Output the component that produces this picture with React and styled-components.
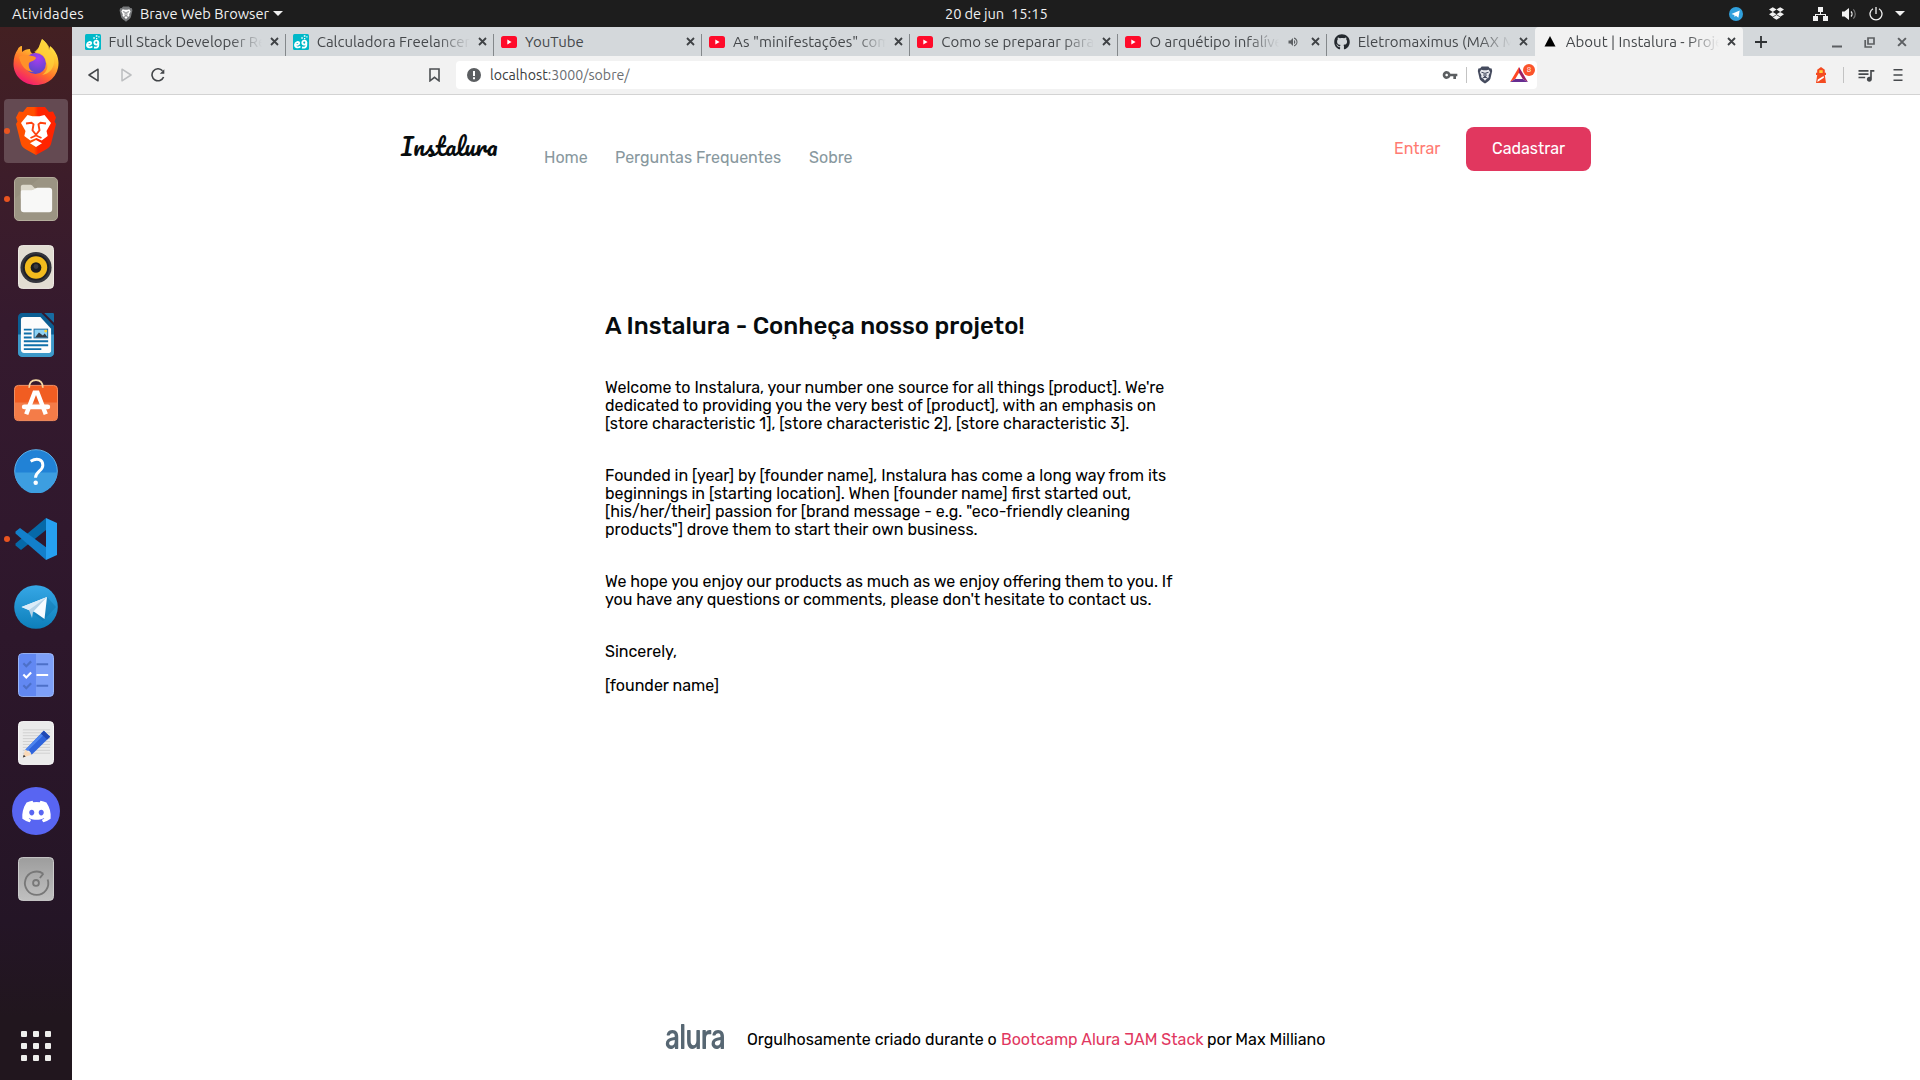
import React, { useLayoutEffect, useRef, useState } from "react";
import styled, { createGlobalStyle, css } from "styled-components";
import { FaGithub, FaDropbox, FaDiscord } from "react-icons/fa";
import { MdVpnKey, MdVolumeUp, MdQueueMusic } from "react-icons/md";

const GlobalStyle = createGlobalStyle`
  * { box-sizing: border-box; }
  body { margin: 0; background: #fff; overflow: hidden; }
  svg { display: block; flex: none; }
`;

const uiFont = `"Ubuntu", "Noto Sans", "Open Sans", sans-serif`;
const pageFont = `"Rubik", Roboto, "Liberation Sans", sans-serif`;

/* ---------- text that is tracked to a fixed measure ---------- */
const Line = styled.span`
  display: block;
  flex: none;
  white-space: pre;
  width: ${(p) => p.$w}px;
`;

/* Natural spacing (and ligatures) is kept when the text is already close to its measure. */
function Fit({ w, children, as, slack = 0.02 }) {
  const ref = useRef(null);
  const [gap, setGap] = useState("normal");
  useLayoutEffect(() => {
    const range = document.createRange();
    range.selectNodeContents(ref.current);
    const natural = range.getBoundingClientRect().width;
    if (Math.abs(natural - w) > w * slack) {
      setGap(`${(w - natural) / ref.current.textContent.length}px`);
    }
  }, []);
  return (
    <Line ref={ref} as={as} $w={w} style={{ letterSpacing: gap }}>
      {children}
    </Line>
  );
}

/* ---------- desktop ---------- */
const Desktop = styled.div`
  width: 1920px;
  height: 1080px;
  display: flex;
  flex-direction: column;
  overflow: hidden;
  background: #fff;
`;

const TopBar = styled.header`
  height: 27px;
  flex: none;
  display: grid;
  grid-template-columns: 945px 1fr auto;
  align-items: center;
  background: #1d1d1d;
  color: #f0f0f0;
  font: 400 14.667px/26px ${uiFont};
`;

const TopGroup = styled.div`
  display: flex;
  align-items: center;
  height: 26px;
  padding-left: ${(p) => p.$left || 0}px;
`;

const Space = styled.span`
  flex: none;
  width: ${(p) => p.$w}px;
`;

const Caret = styled.i`
  width: 0;
  height: 0;
  border: 5px solid transparent;
  border-top: 5px solid #f0f0f0;
  border-bottom: 0;
`;

const Body = styled.div`
  flex: 1;
  display: flex;
  min-height: 0;
`;

/* ---------- dock ---------- */
const Dock = styled.nav`
  width: 72px;
  flex: none;
  display: flex;
  flex-direction: column;
  padding: 2px 0 16px;
  background: linear-gradient(#432022 0%, #3d1d2a 14%, #351a2e 28%, #30182d 48%, #2a1629 68%, #241526 85%, #21161e 94%, #21161e 100%);
`;

const Slot = styled.div`
  position: relative;
  height: 68px;
  flex: none;
  display: flex;
  align-items: center;
  justify-content: center;
`;

const Tile = styled.div`
  width: 64px;
  height: 64px;
  border-radius: 4px;
  display: flex;
  align-items: center;
  justify-content: center;
  background: ${(p) => (p.$active ? "#644a52" : "transparent")};
`;

const RunningDot = styled.i`
  position: absolute;
  left: 4px;
  top: 31px;
  width: 6px;
  height: 6px;
  border-radius: 50%;
  background: #e95420;
`;

const DiscordDisc = styled.div`
  width: 48px;
  height: 48px;
  border-radius: 50%;
  background: #5865f2;
  color: #fff;
  display: flex;
  align-items: center;
  justify-content: center;
`;

const AppsGrid = styled.div`
  margin: auto auto 0;
  height: 33px;
  display: grid;
  grid-template-columns: repeat(3, 6px);
  grid-auto-rows: 6px;
  gap: 6px;
`;

const AppsCell = styled.i`
  background: #eeeeec;
  border-radius: 1px;
`;

/* ---------- browser chrome ---------- */
const Browser = styled.section`
  flex: 1;
  min-width: 0;
  display: flex;
  flex-direction: column;
`;

const TabStrip = styled.div`
  height: 29px;
  flex: none;
  display: flex;
  background: #d4d8db;
  padding-left: 5.5px;
  color: #46494c;
`;

const TabBox = styled.div`
  width: 208.2px;
  flex: none;
  display: flex;
  align-items: center;
  padding-left: 7px;
  font: 400 15px/29px ${uiFont};
  color: #45484b;
  ${(p) =>
    p.$active
      ? css`
          background: #f2f2f2;
          border-radius: 4px 4px 0 0;
        `
      : css`
          background: linear-gradient(#84888b, #84888b) no-repeat right bottom /
            ${p.$last ? "0" : "1px"} 22px;
        `}
`;

const Favicon = styled.span`
  width: 16px;
  flex: none;
  margin-right: 8px;
  display: flex;
  justify-content: center;
`;

const TabTitle = styled.span`
  width: ${(p) => p.$w}px;
  flex: none;
  overflow: hidden;
  white-space: nowrap;
  mask-image: ${(p) =>
    p.$fade ? "linear-gradient(90deg, #000 calc(100% - 32px), transparent)" : "none"};
`;

const TabEnd = styled.span`
  margin-left: auto;
  padding-right: 7px;
  display: flex;
  align-items: center;
  gap: 12px;
`;

const StripTools = styled.div`
  flex: 1;
  display: flex;
  align-items: center;
  padding: 1px 13px 0 12px;
`;

const Toolbar = styled.div`
  height: 39px;
  flex: none;
  display: flex;
  align-items: center;
  background: #f2f2f2;
  border-bottom: 1px solid #d3d3d3;
`;

const NavButtons = styled.div`
  width: 384px;
  padding: 0 16px;
  display: flex;
  align-items: center;
`;

const AddressBar = styled.div`
  width: 1081px;
  height: 28px;
  border-radius: 4px;
  background: #fff;
  display: flex;
  align-items: center;
  padding: 0 2px 0 11px;
  font: 400 14.2px/28px ${uiFont};
  color: #6b6e71;
  b { font-weight: 400; color: #3b3d40; }
`;

const AddressTools = styled.div`
  margin-left: auto;
  display: flex;
  align-items: center;
`;

const Divider = styled.i`
  width: 1px;
  height: 16px;
  background: #c3c3c3;
`;

const Rewards = styled.div`
  position: relative;
  width: 25px;
  height: 22px;
  padding: 3px 0 0;
`;

const RewardBadge = styled.span`
  position: absolute;
  right: 0;
  top: 0;
  width: 12px;
  height: 12px;
  border-radius: 50%;
  background: #fb542b;
  color: #fff;
  text-align: center;
  font: 400 8px/12px ${uiFont};
`;

const ToolbarEnd = styled.div`
  margin-left: auto;
  padding-right: 17px;
  display: flex;
  align-items: center;
`;

/* ---------- web page ---------- */
const Page = styled.main`
  flex: 1;
  min-height: 0;
  display: flex;
  flex-direction: column;
  background: #fff;
  color: #000;
  font: 400 16px/18px ${pageFont};
`;

const SiteHeader = styled.header`
  display: flex;
  align-items: flex-start;
  padding: 32px 329px 0;
`;

const Brand = styled.span`
  width: 97px;
  height: 38px;
  margin: 0 46px 0 0;
  font: 400 24.3px/38px "Pacifico", Lato, cursive;
  color: #070c0e;
  white-space: nowrap;
`;

const Links = styled.nav`
  display: flex;
  gap: 28px;
  padding-top: 22px;
  color: #88989e;
`;

const Actions = styled.div`
  margin-left: auto;
  display: flex;
  align-items: center;
  gap: 26px;
`;

const SignIn = styled.a`
  color: #ff7b72;
`;

const SignUp = styled.button`
  width: 125px;
  height: 44px;
  border: 0;
  border-radius: 8px;
  padding: 0 0 0 26px;
  background: #e1375f;
  color: #fff;
  font: inherit;
  text-align: left;
`;

const Article = styled.article`
  padding: 141px 0 0 533px;
`;

const Title = styled.h1`
  margin: 0 0 39px;
  font: 500 24px/28px ${pageFont};
  color: #070c0e;
`;

const Paragraph = styled.p`
  margin: 0 0 ${(p) => p.$gap || 34}px;
`;

const SiteFooter = styled.footer`
  margin-top: auto;
  height: 81px;
  display: flex;
  align-items: center;
  padding-left: 593px;
`;

const AluraMark = styled.span`
  width: 60px;
  height: 34px;
  margin-right: 22px;
  color: #576773;
  font: 500 26px/36px ${pageFont};
  transform: scale(1, 1.37);
  transform-origin: 0 26px;
`;

const FooterText = styled.p`
  margin: 0;
  display: flex;
  gap: 4px;
  a { color: #e1375f; }
`;

/* ---------- small icons ---------- */
const Cross = ({ s = 9, c = "#3f4245", w = 1.8 }) => (
  <svg width={s} height={s} viewBox="0 0 9 9" stroke={c} strokeWidth={w}>
    <path d="M1 1l7 7M8 1l-7 7" />
  </svg>
);

const YouTube = () => (
  <svg width="16" height="12" viewBox="0 0 16 12">
    <rect width="16" height="12" rx="2.6" fill="#ff0b2a" />
    <path d="M6.3 3.500v5l4.300-2.500z" fill="#fff" />
  </svg>
);

const NinetyNine = () => (
  <svg width="16" height="16" viewBox="0 0 16 16">
    <rect width="16" height="16" rx="1.500" fill="#00b8c8" />
    <g fill="none" stroke="#fff" strokeWidth="1.800">
      <circle cx="11.300" cy="8.600" r="2" />
      <path d="M13.300 8.300v3c0 2-1.800 2.700-4.300 2.200M2 10.700c2 .6 4.300-.2 4.200-1.700-.2-1.700-3.900-1.200-4.200 1.700-.2 3 3.600 3.500 5.300 1.600" />
    </g>
    <path d="M8.300 3.200h1.500v1.500H8.300zM10.800 1.200h1.600v1.600h-1.600zM11 4h1.300v1.300H11zM13.300 2.300h1.200v1.200h-1.200z" fill="#fff" />
  </svg>
);

const Triangle = () => (
  <svg width="12" height="11" viewBox="0 0 12 11"><path d="M6 0l5.500 10.500H.5z" fill="#000" /></svg>
);

const ShieldLion = ({ w, h, dark, face }) => (
  <svg width={w} height={h} viewBox="0 0 16 19">
    <path d="M4.500.6h7l1.600 1.700 1.900.4.600 2.500-1.900 8.200c-.4 1.500-3.500 3.600-5.700 5.200-2.200-1.600-5.300-3.700-5.700-5.200L.4 5.200 1 2.700l1.900-.4z" fill={dark} />
    <path d="M4 4l2.500.5h3L12 4l1.500 2.500-1.700 3.300.3 2.200-2.300 1.500L8 15.600l-1.800-2.100L3.900 12l.3-2.200L2.500 6.500z" fill={face} />
    <path d="M4.300 6.700l2.900.8-.3 2.600L8 11.600l1.100-1.500-.3-2.600 2.900-.8M5.700 12.300L8 11.800l2.300.5" fill="none" stroke={dark} strokeWidth="1.100" />
  </svg>
);

const TelegramSmall = () => (
  <svg width="14" height="14" viewBox="0 0 14 14">
    <circle cx="7" cy="7" r="7" fill="#30a0dc" />
    <path d="M2.500 7l8.200-3.600-1.300 7.300-2.500-1.900-1.300 1.300-.3-2.200z" fill="#fff" />
  </svg>
);

const Network = () => (
  <svg width="15" height="14" viewBox="0 0 15 14" fill="#f2f2f2">
    <path d="M5 0h5v5H5zM0 9h5v5H0zM10 9h5v5h-5zM7 5h1v2H7zM2 7h11v2h-1V8H3v1H2z" />
  </svg>
);

const Volume = () => (
  <svg width="15" height="14" viewBox="0 0 15 14">
    <path d="M0 4.500h2.500L7 1v12L2.500 9.500H0z" fill="#f2f2f2" />
    <path d="M9 4.500c1.300 1.300 1.300 3.700 0 5" fill="none" stroke="#f2f2f2" strokeWidth="1.300" />
    <path d="M11.300 2.300c2.600 2.600 2.600 6.800 0 9.400" fill="none" stroke="#777" strokeWidth="1.200" />
  </svg>
);

const Power = () => (
  <svg width="14" height="14" viewBox="0 0 14 14" fill="none" stroke="#f2f2f2" strokeWidth="1.300">
    <path d="M7 0v7M4 1.700a6 6 0 1 0 6 0" />
  </svg>
);

const BackForward = ({ flip, c }) => (
  <svg width="11" height="14" viewBox="0 0 11 14" fill="none" stroke={c} strokeWidth="1.500" strokeLinejoin="round">
    <path d={flip ? "M1 1.200l9 5.800-9 5.800z" : "M10 1.200L1 7l9 5.800z"} />
  </svg>
);

const Reload = () => (
  <svg width="14" height="14" viewBox="0 0 14 14">
    <path d="M11.500 2.800A6 6 0 1 0 12.600 9" fill="none" stroke="#424548" strokeWidth="1.600" />
    <path d="M13.300 1.200v4.500H8.800z" fill="#424548" />
  </svg>
);

const Bookmark = () => (
  <svg width="11" height="14" viewBox="0 0 11 14" fill="none" stroke="#4c4f52" strokeWidth="1.600">
    <path d="M1 1h9v11.800L5.500 9.300 1 12.800z" />
  </svg>
);

const Info = () => (
  <svg width="14" height="14" viewBox="0 0 14 14">
    <circle cx="7" cy="7" r="7" fill="#5b5e61" />
    <path d="M6 3h2v5H6zM6 9.300h2v2H6z" fill="#fff" />
  </svg>
);

const Bat = () => (
  <svg width="18" height="15" viewBox="0 0 19 16">
    <path d="M9.500 0L0 16l5.500-3.100 4-6.900z" fill="#ff4724" />
    <path d="M9.500 0L19 16l-5.500-3.100-4-6.900z" fill="#9e1f63" />
    <path d="M0 16h19l-5.500-3.100h-8z" fill="#662d91" />
  </svg>
);

const Lighthouse = () => (
  <svg width="12" height="16" viewBox="0 0 12 16">
    <path d="M6 0l3.800 2.800v3h1.200V8H9.800l1.200 8H1l1.200-8H1V5.800h1.200v-3z" fill="#f44b21" />
    <rect x="4.300" y="3.200" width="3.400" height="2.800" fill="#ffd13b" />
    <path d="M2.800 12.400L8.600 9l.3 1.800L2.300 15z" fill="#fff" />
  </svg>
);

const Restore = () => (
  <svg width="11" height="11" viewBox="0 0 11 11" fill="none" stroke="#5c5f62" strokeWidth="1.700">
    <path d="M4 1h6v6H4zM1.200 3v7H8" />
  </svg>
);

/* ---------- dock icons ---------- */
const Firefox = () => (
  <svg width="46" height="48" viewBox="0 0 46 48">
    <defs>
      <linearGradient id="fx1" x1=".8" y1="0" x2=".25" y2="1">
        <stop offset="0" stopColor="#fff44f" /><stop offset=".35" stopColor="#ffbd2e" />
        <stop offset=".65" stopColor="#ff6a2b" /><stop offset="1" stopColor="#f0107a" />
      </linearGradient>
      <radialGradient id="fx2" cx=".6" cy=".25" r=".8">
        <stop offset="0" stopColor="#a83df0" /><stop offset="1" stopColor="#5148c4" />
      </radialGradient>
    </defs>
    <path d="M29 0c4 3 6 6 7 11 1-1 1-2 1-4 5 4 8.500 10 8.500 17C45.500 37 35.500 46 23 46S.5 37 .5 25C.5 19 2 14 5 10c0-1 2-3 4-3v6c2-2 5-3 8-3 0 2 1 4 3 5 6-3 6-9 9-15z" fill="url(#fx1)" />
    <circle cx="22.500" cy="24.500" r="10.500" fill="url(#fx2)" />
    <path d="M6 18c4-3 9-2 13-1 2 0 4 1 4 2-1 3-5 3-7 5-1 4 1 8 5 9-8 0-13-6-15-15z" fill="#ff912a" />
    <path d="M29 0c-1 7-5 11-8 13 7 0 12 4 12 10 3 4 1 10-4 13 8-1 13-8 12-16C40 11 34 4 29 0z" fill="#ffd03a" opacity=".75" />
  </svg>
);

const BraveLion = () => (
  <svg width="40" height="48" viewBox="0 0 40 48">
    <defs>
      <linearGradient id="br"><stop offset=".45" stopColor="#ff5000" /><stop offset=".55" stopColor="#ff2400" /></linearGradient>
    </defs>
    <path d="M11 0h18l4 5 4-.5 3 6-1.500 4L40 17l-5 20c-1 3-3 4-6 6l-9 5-9-5c-3-2-5-3-6-6L0 17l1.500-2.500L0 10.500l3-6L7 5z" fill="url(#br)" />
    <path d="M11.500 8l5 1.200h7L28.500 8l6.500 8-4.500 8 1.200 5-6 4.500-5.200-2.500-6.200 2.500-6-4.500 1.200-5L5 16zM20 33l6 3.200L20 40l-6-3.800z" fill="#fff" />
    <path d="M10 16.500l5.500-.7 2 1.500-1 6 3.500 4.500 3.500-4.500-1-6 2-1.500 5.500.7M14.500 31l5.500-2.500 5.500 2.500" fill="none" stroke="#ff4210" strokeWidth="1.900" />
  </svg>
);

const Files = () => (
  <svg width="44" height="44" viewBox="0 0 45 45">
    <rect x=".5" y=".5" width="44" height="44" rx="4.500" fill="#968f7e" stroke="#b7b09f" />
    <path d="M1 22L26 1h14c3 0 4 2 4 4v35c0 3-2 4-4 4H5c-3 0-4-2-4-4z" fill="#a09987" opacity=".5" />
    <path d="M7 10c0-1 1-2 2-2h8c2 0 3 3.500 5 3.500h8V22H7z" fill="#dcd8cb" />
    <path d="M7 15c0-1 1-1.500 2-1.500h9c3 0 4-2.500 6-2.500h12c2 0 3 1 3 3v19c0 2-1 3-3 3H10c-2 0-3-1-3-3z" fill="#f8f8f7" />
  </svg>
);

const Rhythmbox = () => (
  <svg width="36" height="44" viewBox="0 0 37 45">
    <rect x=".5" y=".5" width="36" height="44" rx="4" fill="#e2ddd2" stroke="#f1eee7" />
    <circle cx="18.500" cy="23" r="16" fill="#34353c" />
    <circle cx="18.500" cy="23" r="13.500" fill="#1f2026" />
    <circle cx="18.500" cy="23" r="11.500" fill="#f2bb1d" />
    <circle cx="18.500" cy="23" r="5.500" fill="#1c1c1f" />
    <circle cx="18.500" cy="22" r="2.500" fill="#3b3b3f" />
  </svg>
);

const Writer = () => (
  <svg width="36" height="44" viewBox="0 0 37 45">
    <path d="M4 0h20l13 13v28c0 2-2 4-4 4H4c-2 0-4-2-4-4V4c0-2 2-4 4-4z" fill="#0b5e93" />
    <path d="M0 22h37v19c0 2-2 4-4 4H4c-2 0-4-2-4-4z" fill="#3d99c9" />
    <path d="M6 4h17l11 12v23c0 1-1 2-2 2H6c-1 0-3-1-3-3V7c0-2 1-3 3-3z" fill="#fcfcfc" />
    <path d="M27 0h9c1 0 1 1 1 2v8z" fill="#176ba1" />
    <path d="M6 16h8v2H6zM6 20h8v2H6zM6 24h8v2H6zM6 28h25v2H6zM6 32h25v2H6zM6 36h18v2H6z" fill="#0f6fa9" />
    <rect x="16.500" y="16.500" width="14" height="9" fill="#8ed2f4" stroke="#176ba1" />
    <path d="M17.500 25l4-5 4 3 2-2 3 4z" fill="#333c45" /><circle cx="28.500" cy="18.500" r="1.500" fill="#ffd22f" />
  </svg>
);

const Software = () => (
  <svg width="44" height="48" viewBox="0 0 45 49">
    <rect x=".5" y="6.500" width="44" height="36" rx="4" fill="#f15d22" stroke="#f59164" />
    <path d="M1 24h43v15c0 2-1 3-3 3H4c-2 0-3-1-3-3z" fill="#f47c48" />
    <path d="M15.500 9c0-5 2-8 7-8s7 3 7 8" fill="none" stroke="#f5d9a5" strokeWidth="1.800" />
    <path d="M12.500 36l8.500-22h3l8.500 22" fill="none" stroke="#fff" strokeWidth="4.500" />
    <path d="M10.500 28.500h24" stroke="#fff" strokeWidth="5" strokeLinecap="round" />
  </svg>
);

const Help = () => (
  <svg width="44" height="44" viewBox="0 0 45 45">
    <circle cx="22.500" cy="22.500" r="21.800" fill="#2182d6" stroke="#5db1ea" />
    <path d="M1 24a21.500 21.500 0 0 0 43 0z" fill="#3d9ee0" />
    <path d="M17 12.500c7-4 12.500-1.500 12.500 4 0 6-7.500 6.500-7.500 13" fill="none" stroke="#fff" strokeWidth="3" />
    <circle cx="22.200" cy="34.500" r="2.300" fill="#fff" />
  </svg>
);

const Code = () => (
  <svg width="42" height="42" viewBox="0 0 42 42">
    <path d="M31 0v12L6 32l-5.500-4.500v-2z" fill="#0669a8" />
    <path d="M5 10L.5 13.500v2L31 42l1-12z" fill="#1380cb" />
    <path d="M31 0l11 5v32l-11 5z" fill="#26a0f0" />
  </svg>
);

const Telegram = () => (
  <svg width="44" height="44" viewBox="0 0 44 44">
    <defs><linearGradient id="tg" x2="0" y2="1"><stop stopColor="#36a7e6" /><stop offset="1" stopColor="#0d7fba" /></linearGradient></defs>
    <circle cx="22" cy="22" r="21.800" fill="url(#tg)" />
    <path d="M33 12l9 10-13 14-9-7z" fill="#0c6ca2" opacity=".35" />
    <path d="M7.500 22L33 12l-2.500 22-10-7z" fill="#f5fbff" />
    <path d="M7.500 22L33 12 17 25.500l-1.500 0z" fill="#dcecf8" />
    <path d="M15 25L33 12 19 27l-1 6z" fill="#b4d3e8" />
  </svg>
);

const Todo = () => (
  <svg width="36" height="44" viewBox="0 0 37 45">
    <rect x=".5" y=".5" width="36" height="44" rx="4" fill="#7ea0f8" stroke="#9dbafc" />
    <path d="M1 5c0-3 1-4 4-4h13.500v43H5c-3 0-4-1-4-4z" fill="#6288f2" />
    <g fill="none" strokeWidth="2.200">
      <path d="M5.500 10.500l3 3 5-5M5.500 33l3 3 5-5M19 11.500h12M19 33.500h12" stroke="#4d70c8" />
      <path d="M5.500 22l3 3 5-5M19 22.500h12" stroke="#fff" />
    </g>
  </svg>
);

const Notes = () => (
  <svg width="36" height="44" viewBox="0 0 37 45">
    <rect x=".5" y=".5" width="36" height="44" rx="4" fill="#ebebeb" stroke="#fafafa" />
    <path d="M5 9h28M5 12h28M5 15h28M5 18h28M5 21h28M5 24h28M5 27h28M5 30h28M5 33h28" stroke="#c9c9c9" strokeWidth=".8" />
    <path d="M5 37.500l2.500-8 6.500 5z" fill="#fad9b7" /><path d="M5 37.500l.9-2.800 2 1.700z" fill="#333" />
    <path d="M26.500 10l6.500 6-19 18.500c-1-3-3-5-6.500-5z" fill="#2f64dc" />
    <path d="M26.500 10l2.200 2L10 30.500l-2.500-1z" fill="#4d84ee" /><path d="M26.500 10l6.500 6-3 3-6.500-6z" fill="#2049b4" />
  </svg>
);

const Disk = () => (
  <svg width="36" height="44" viewBox="0 0 37 45">
    <defs><linearGradient id="dk" x2="0" y2="1"><stop stopColor="#9d9d9d" /><stop offset="1" stopColor="#c0c0c0" /></linearGradient></defs>
    <rect x=".5" y=".5" width="36" height="44" rx="4" fill="url(#dk)" stroke="#cfcfcf" />
    <g fill="none" stroke="#787878" strokeWidth="1.900">
      <circle cx="18.500" cy="26.500" r="3" />
      <path d="M26 17a12 12 0 1 0 4.500 6M26 17l-3.500 4.500" />
    </g>
  </svg>
);

const dockApps = [
  { icon: <Firefox /> },
  { icon: <BraveLion />, active: true, running: true },
  { icon: <Files />, running: true },
  { icon: <Rhythmbox /> },
  { icon: <Writer /> },
  { icon: <Software /> },
  { icon: <Help /> },
  { icon: <Code />, running: true },
  { icon: <Telegram /> },
  { icon: <Todo /> },
  { icon: <Notes /> },
  { icon: <DiscordDisc><FaDiscord size={31} /></DiscordDisc> },
  { icon: <Disk /> },
];

const tabs = [
  { icon: <NinetyNine />, title: "Full Stack Developer Re" },
  { icon: <NinetyNine />, title: "Calculadora Freelancer" },
  { icon: <YouTube />, title: "YouTube", plain: true },
  { icon: <YouTube />, title: 'As "minifestações" com' },
  { icon: <YouTube />, title: "Como se preparar para" },
  { icon: <YouTube />, title: "O arquétipo infalíve", clip: 130, sound: true },
  { icon: <FaGithub size={16} color="#24292e" />, title: "Eletromaximus (MAX M" },
  { icon: <Triangle />, title: "About | Instalura - Proje", active: true },
];

const story = [
  [
    ["Welcome to Instalura, your number one source for all things [product]. We're", 559],
    ["dedicated to providing you the very best of [product], with an emphasis on", 551],
    ["[store characteristic 1], [store characteristic 2], [store characteristic 3].", 524],
  ],
  [
    ["Founded in [year] by [founder name], Instalura has come a long way from its", 561],
    ["beginnings in [starting location]. When [founder name] first started out,", 526],
    ["[his/her/their] passion for [brand message - e.g. \"eco-friendly cleaning", 525],
    ["products\"] drove them to start their own business.", 373],
  ],
  [
    ["We hope you enjoy our products as much as we enjoy offering them to you. If", 568],
    ["you have any questions or comments, please don't hesitate to contact us.", 547],
  ],
];

export default function App() {
  return (
    <Desktop>
      <GlobalStyle />
      <TopBar>
        <TopGroup $left={12}>
          <Fit w={72} slack={0.01}>Atividades</Fit>
          <Space $w={35} />
          <ShieldLion w={14} h={16} dark="#77797b" face="#fff" />
          <Space $w={7} />
          <Fit w={128}>Brave Web Browser</Fit>
          <Space $w={5} />
          <Caret />
        </TopGroup>
        <TopGroup>
          <Fit w={59}>20 de jun</Fit>
          <Space $w={7} />
          <Fit w={36}>15:15</Fit>
        </TopGroup>
        <TopGroup>
          <TelegramSmall />
          <Space $w={26} />
          <FaDropbox size={15} />
          <Space $w={29} />
          <Network />
          <Space $w={14} />
          <Volume />
          <Space $w={12} />
          <Power />
          <Space $w={12} />
          <Caret />
          <Space $w={15} />
        </TopGroup>
      </TopBar>
      <Body>
        <Dock>
          {dockApps.map((app, i) => (
            <Slot key={i}>
              <Tile $active={app.active}>{app.icon}</Tile>
              {app.running && <RunningDot />}
            </Slot>
          ))}
          <AppsGrid>
            {Array.from({ length: 9 }, (_, i) => <AppsCell key={i} />)}
          </AppsGrid>
        </Dock>
        <Browser>
          <TabStrip>
            {tabs.map((tab, i) => (
              <TabBox key={i} $active={tab.active} $last={i === 6}>
                <Favicon>{tab.icon}</Favicon>
                <TabTitle $w={tab.clip || 153} $fade={!tab.plain}>{tab.title}</TabTitle>
                <TabEnd>
                  {tab.sound && <MdVolumeUp size={12} color="#5d6063" />}
                  <Cross />
                </TabEnd>
              </TabBox>
            ))}
            <StripTools>
              <svg width="12" height="12" viewBox="0 0 12 12" stroke="#2e3133" strokeWidth="1.800"><path d="M6 0v12M0 6h12" /></svg>
              <Space $w={65} />
              <svg width="10" height="11" viewBox="0 0 10 11"><path d="M0 8.500h10v2H0z" fill="#5c5f62" /></svg>
              <Space $w={22} />
              <Restore />
              <Space $w={22} />
              <Cross s={10} c="#5c5f62" w={1.8} />
            </StripTools>
          </TabStrip>
          <Toolbar>
            <NavButtons>
              <BackForward c="#424548" />
              <Space $w={22} />
              <BackForward flip c="#bcbec0" />
              <Space $w={19} />
              <Reload />
              <Space $w={264} />
              <Bookmark />
            </NavButtons>
            <AddressBar>
              <Info />
              <Space $w={9} />
              <Fit w={139} slack={0.005}><b>localhost</b>:3000/sobre/</Fit>
              <AddressTools>
                <MdVpnKey size={16} color="#5b5e61" />
                <Space $w={8} />
                <Divider />
                <Space $w={10} />
                <ShieldLion w={16} h={18} dark="#454b5e" face="#e9eaee" />
                <Space $w={17} />
                <Rewards>
                  <Bat />
                  <RewardBadge>8</RewardBadge>
                </Rewards>
              </AddressTools>
            </AddressBar>
            <ToolbarEnd>
              <Lighthouse />
              <Space $w={16} />
              <Divider />
              <Space $w={12} />
              <MdQueueMusic size={20} color="#46494c" />
              <Space $w={17} />
              <svg width="10" height="12" viewBox="0 0 10 12" fill="#46494c"><path d="M.5 0h9v1.600h-9zM.5 5.200h9v1.600h-9zM.5 10.400h9V12h-9z" /></svg>
            </ToolbarEnd>
          </Toolbar>
          <Page>
            <SiteHeader>
              <Brand>Instalura</Brand>
              <Links>
                <Fit as="a" w={43}>Home</Fit>
                <Fit as="a" w={166}>Perguntas Frequentes</Fit>
                <Fit as="a" w={43}>Sobre</Fit>
              </Links>
              <Actions>
                <SignIn><Fit w={46}>Entrar</Fit></SignIn>
                <SignUp><Fit w={73}>Cadastrar</Fit></SignUp>
              </Actions>
            </SiteHeader>
            <Article>
              <Title><Fit w={420}>A Instalura - Conheça nosso projeto!</Fit></Title>
              {story.map((lines, i) => (
                <Paragraph key={i}>
                  {lines.map(([text, w]) => <Fit key={text} w={w}>{text}</Fit>)}
                </Paragraph>
              ))}
              <Paragraph $gap={16}><Fit w={73}>Sincerely,</Fit></Paragraph>
              <Paragraph><Fit w={114}>[founder name]</Fit></Paragraph>
            </Article>
            <SiteFooter>
              <AluraMark><Fit w={60}>alura</Fit></AluraMark>
              <FooterText>
                <Fit w={250}>Orgulhosamente criado durante o</Fit>
                <Fit as="a" w={202}>Bootcamp Alura JAM Stack</Fit>
                <Fit w={119}>por Max Milliano</Fit>
              </FooterText>
            </SiteFooter>
          </Page>
        </Browser>
      </Body>
    </Desktop>
  );
}
